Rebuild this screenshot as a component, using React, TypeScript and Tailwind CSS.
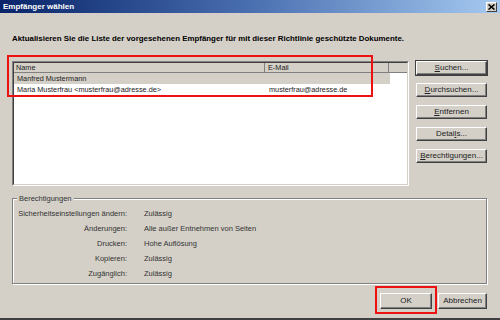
import React from 'react';

const font = { fontFamily: '"Liberation Sans", Arial, sans-serif' };

function Btn({ children, def = false, className = '' }: { children: React.ReactNode; def?: boolean; className?: string }) {
  return (
    <div
      className={`flex items-center justify-center bg-[#d4d0c8] text-[8px] text-[#222] leading-none ${
        def ? 'outline outline-1 outline-[#404040]' : ''
      } border border-t-white border-l-white border-r-[#404040] border-b-[#404040] shadow-[inset_-1px_-1px_0_#808080] ${className}`}
    >
      {children}
    </div>
  );
}

const perms = [
  ['Sicherheitseinstellungen ändern:', 'Zulässig'],
  ['Änderungen:', 'Alle außer Entnehmen von Seiten'],
  ['Drucken:', 'Hohe Auflösung'],
  ['Kopieren:', 'Zulässig'],
  ['Zugänglich:', 'Zulässig'],
];

export default function App() {
  return (
    <div style={font} className="relative w-[500px] h-[320px] bg-[#d4d0c8] flex flex-col border-b-2 border-[#404040] overflow-hidden">
      {/* title bar */}
      <div className="h-[13px] flex items-center justify-between bg-gradient-to-r from-[#0a246a] via-[#4a6fb0] to-[#a6caf0] pl-[3px] pr-[3px]">
        <span className="text-white font-bold text-[8px] leading-none">Empfänger wählen</span>
        <div className="w-[11px] h-[10px] bg-[#d4d0c8] flex items-center justify-center border border-t-white border-l-white border-r-[#404040] border-b-[#404040]">
          <svg width="7" height="6" viewBox="0 0 7 6">
            <path d="M0.5 0.5 L6.5 5.5 M6.5 0.5 L0.5 5.5" stroke="#000" strokeWidth="1.6" />
          </svg>
        </div>
      </div>

      <div className="pl-[12px] pr-[13px] flex flex-col">
        <div className="mt-[21px] h-[10px] text-[7.9px] font-bold leading-[10px] text-black">
          Aktualisieren Sie die Liste der vorgesehenen Empfänger für mit dieser Richtlinie geschützte Dokumente.
        </div>

        <div className="mt-[17px] flex justify-between">
          {/* list */}
          <div className="w-[397px] h-[125px] bg-white border border-t-[#808080] border-l-[#808080] border-r-white border-b-white">
            <div className="h-full border border-t-[#404040] border-l-[#404040] border-r-[#d4d0c8] border-b-[#d4d0c8] flex flex-col text-[7.3px] text-[#222] leading-none">
              <div className="flex h-[10px] bg-[#d4d0c8] border-b border-[#808080]">
                <div className="w-[251px] pl-[2px] flex items-center border-r border-[#808080]">Name</div>
                <div className="w-[124px] pl-[3px] flex items-center border-r border-[#808080]">E-Mail</div>
                <div className="flex-1" />
              </div>
              <div className="flex h-[11px] w-[376px] bg-[#d4d0c8] items-center">
                <div className="w-[252px] pl-[3px]">Manfred Mustermann</div>
                <div className="flex-1" />
              </div>
              <div className="flex h-[11px] items-center">
                <div className="w-[252px] pl-[3px]">Maria Musterfrau &lt;musterfrau@adresse.de&gt;</div>
                <div className="pl-[3px]">musterfrau@adresse.de</div>
              </div>
            </div>
          </div>

          {/* side buttons */}
          <div className="flex flex-col gap-[8px] w-[71px]">
            <Btn def className="h-[14px]"><span><u>S</u>uchen...</span></Btn>
            <Btn className="h-[14px]"><span><u>D</u>urchsuchen...</span></Btn>
            <Btn className="h-[14px]"><span><u>E</u>ntfernen</span></Btn>
            <Btn className="h-[14px]"><span>Detai<u>l</u>s...</span></Btn>
            <Btn className="h-[14px]"><span><u>B</u>erechtigungen...</span></Btn>
          </div>
        </div>

        {/* group box */}
        <div className="relative mt-[12px] h-[86px] border border-[#808080] shadow-[inset_1px_1px_0_white,1px_1px_0_white] pt-[10px]">
          <span className="absolute -top-[5px] left-[4px] bg-[#d4d0c8] px-[2px] text-[7.5px] leading-[9px] text-[#333]">
            Berechtigungen
          </span>
          <div className="flex flex-col gap-[5px] text-[7.5px] leading-[10px] text-[#333]">
            {perms.map(([k, v]) => (
              <div key={k} className="flex">
                <div className="w-[114px] text-right">{k}</div>
                <div className="pl-[17px]">{v}</div>
              </div>
            ))}
          </div>
        </div>

        {/* footer */}
        <div className="mt-[9px] flex justify-end gap-[6px]">
          <Btn className="w-[52px] h-[16px]">OK</Btn>
          <Btn className="w-[49px] h-[16px]">Abbrechen</Btn>
        </div>
      </div>

      {/* red annotations */}
      <div className="absolute left-[7px] top-[55px] w-[366px] h-[42px] border-2 border-[#ee1111]" />
      <div className="absolute left-[375px] top-[286px] w-[62px] h-[28px] border-2 border-[#ee1111]" />
    </div>
  );
}
